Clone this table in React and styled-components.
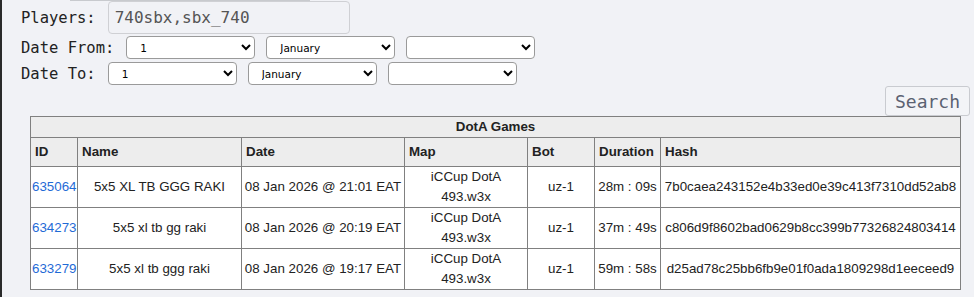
import React from 'react'
import styled, { createGlobalStyle } from 'styled-components'

const GlobalStyle = createGlobalStyle`
  html, body {
    margin: 0;
    padding: 0;
    background: #f1f2f6;
  }
`

const Page = styled.div`
  min-height: 297px;
  box-sizing: border-box;
  border-left: 2px solid #2a2a2a;
  background: #f1f2f6;
  color: #222;
`

const TopEdge = styled.div`
  margin-left: 68px;
  width: 240px;
  height: 1px;
  background: #c8cace;
`

const FilterForm = styled.form`
  display: flex;
  flex-direction: column;
  padding-left: 19px;
`

const FormRow = styled.div`
  display: flex;
  align-items: center;
  gap: 11px;
  height: ${(p) => p.h}px;
  margin-top: ${(p) => p.mt || 0}px;
`

const FieldLabel = styled.label`
  font-family: 'DejaVu Sans Mono', 'Liberation Mono', monospace;
  font-size: 15.5px;
  color: #222;
  padding-right: 1px;
  white-space: pre;
`

const PlayersInput = styled.input`
  box-sizing: border-box;
  width: 242px;
  height: 33px;
  padding: 0 0 0 6px;
  border: 1px solid #cfd0d4;
  border-radius: 4px;
  background: #f1f2f6;
  color: #555;
  font-family: 'DejaVu Sans Mono', 'Liberation Mono', monospace;
  font-size: 16px;
  outline: none;
`

const DateSelect = styled.select`
  box-sizing: border-box;
  width: 129px;
  height: 23px;
  padding: 0 0 0 9px;
  border: 1px solid #9a9a9a;
  border-radius: 4px;
  background-color: #fff;
  color: #000;
  font-family: 'DejaVu Sans', Verdana, sans-serif;
  font-size: 10.5px;
`

const ActionBar = styled.div`
  display: flex;
  justify-content: flex-end;
  padding-right: 4px;
  margin-top: 1px;
`

const SearchButton = styled.button`
  box-sizing: border-box;
  width: 85px;
  height: 30px;
  padding: 0;
  border: 1px solid #c9cbd0;
  border-radius: 3px;
  background: #f3f4f7;
  color: #5b6272;
  font-family: 'DejaVu Sans Mono', 'Liberation Mono', monospace;
  font-size: 18px;
`

const GamesTable = styled.table`
  margin-left: 28px;
  width: 931px;
  table-layout: fixed;
  border-collapse: collapse;
  border: 1px solid #808080;
  background: #fff;
  font-family: 'Liberation Sans', Arial, sans-serif;
  font-size: 13.33px;
  line-height: 20px;
  color: #222;
`

const TitleCell = styled.th`
  padding: 0;
  border: 1px solid #808080;
  background: #ededed;
  font-weight: bold;
  text-align: center;
`

const HeadCell = styled.th`
  padding: 4px 4px;
  border: 1px solid #808080;
  background: #ededed;
  font-weight: bold;
  text-align: left;
  white-space: nowrap;
  overflow: hidden;
`

const Cell = styled.td`
  height: 40px;
  padding: 0 ${(p) => (p.wrap ? 4 : 1)}px;
  border: 1px solid #808080;
  text-align: center;
  white-space: ${(p) => (p.wrap ? 'normal' : 'nowrap')};
  overflow: hidden;
`

const GameLink = styled.a`
  color: #1f6bd6;
  text-decoration: none;
`

const columns = [
  { name: 'ID', width: 47 },
  { name: 'Name', width: 164 },
  { name: 'Date', width: 163 },
  { name: 'Map', width: 123 },
  { name: 'Bot', width: 67 },
  { name: 'Duration', width: 66 },
  { name: 'Hash', width: 300 },
]

const games = [
  {
    id: '635064',
    name: '5x5 XL TB GGG RAKI',
    date: '08 Jan 2026 @ 21:01 EAT',
    map: 'iCCup DotA 493.w3x',
    bot: 'uz-1',
    duration: '28m : 09s',
    hash: '7b0caea243152e4b33ed0e39c413f7310dd52ab8',
  },
  {
    id: '634273',
    name: '5x5 xl tb gg raki',
    date: '08 Jan 2026 @ 20:19 EAT',
    map: 'iCCup DotA 493.w3x',
    bot: 'uz-1',
    duration: '37m : 49s',
    hash: 'c806d9f8602bad0629b8cc399b77326824803414',
  },
  {
    id: '633279',
    name: '5x5 xl tb ggg raki',
    date: '08 Jan 2026 @ 19:17 EAT',
    map: 'iCCup DotA 493.w3x',
    bot: 'uz-1',
    duration: '59m : 58s',
    hash: 'd25ad78c25bb6fb9e01f0ada1809298d1eeceed9',
  },
]

const months = [
  'January', 'February', 'March', 'April', 'May', 'June',
  'July', 'August', 'September', 'October', 'November', 'December',
]

const DateSelects = () => (
  <>
    <DateSelect defaultValue="1">
      {Array.from({ length: 31 }, (_, i) => (
        <option key={i} value={i + 1}>
          {i + 1}
        </option>
      ))}
    </DateSelect>
    <DateSelect defaultValue="January">
      {months.map((m) => (
        <option key={m}>{m}</option>
      ))}
    </DateSelect>
    <DateSelect defaultValue="">
      <option value=""></option>
      <option>2026</option>
      <option>2025</option>
    </DateSelect>
  </>
)

const App = () => {
  return (
    <Page>
      <GlobalStyle />
      <TopEdge />
      <FilterForm onSubmit={(e) => e.preventDefault()}>
        <FormRow h={33}>
          <FieldLabel>Players:</FieldLabel>
          <PlayersInput defaultValue="740sbx,sbx_740" />
        </FormRow>
        <FormRow h={23} mt={2}>
          <FieldLabel>Date From:</FieldLabel>
          <DateSelects />
        </FormRow>
        <FormRow h={23} mt={3}>
          <FieldLabel>Date To:</FieldLabel>
          <DateSelects />
        </FormRow>
      </FilterForm>
      <ActionBar>
        <SearchButton type="button">Search</SearchButton>
      </ActionBar>
      <GamesTable>
        <colgroup>
          {columns.map((c) => (
            <col key={c.name} style={{ width: c.width }} />
          ))}
        </colgroup>
        <thead>
          <tr>
            <TitleCell colSpan={columns.length}>DotA Games</TitleCell>
          </tr>
          <tr>
            {columns.map((c) => (
              <HeadCell key={c.name}>{c.name}</HeadCell>
            ))}
          </tr>
        </thead>
        <tbody>
          {games.map((g) => (
            <tr key={g.id}>
              <Cell>
                <GameLink href="#">{g.id}</GameLink>
              </Cell>
              <Cell>{g.name}</Cell>
              <Cell>{g.date}</Cell>
              <Cell wrap>{g.map}</Cell>
              <Cell>{g.bot}</Cell>
              <Cell>{g.duration}</Cell>
              <Cell>{g.hash}</Cell>
            </tr>
          ))}
        </tbody>
      </GamesTable>
    </Page>
  )
}

export default App
